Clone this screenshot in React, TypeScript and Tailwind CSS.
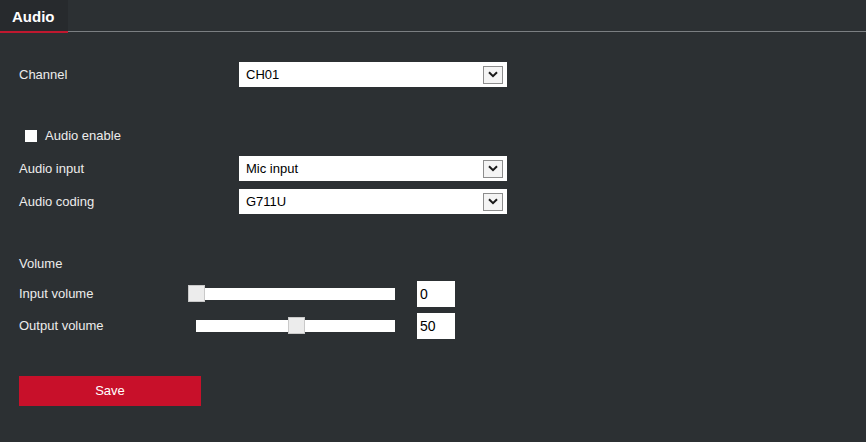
const font = "font-['Liberation_Sans',Arial,sans-serif]";

function Select({ value }: { value: string }) {
  return (
    <div className="flex h-[25px] w-[268px] items-center justify-between bg-white pl-[7px] pr-[4px] text-[13px] text-black">
      <span>{value}</span>
      <span className="flex h-[18px] w-[20px] items-center justify-center border border-[#8d8d8d] bg-[#f4f4f4]">
        <svg width="10" height="7" viewBox="0 0 10 7">
          <path d="M1 1.2 L5 5.2 L9 1.2" fill="none" stroke="#1a1a1a" strokeWidth="2" />
        </svg>
      </span>
    </div>
  );
}

function Slider({ width, thumbLeft }: { width: number; thumbLeft: string }) {
  return (
    <div className="relative h-[12px] bg-white" style={{ width }}>
      <div
        className={`absolute top-[-3px] h-[17px] w-[17px] border border-[#c9c9c9] bg-[#ececec] ${thumbLeft}`}
      />
    </div>
  );
}

export default function App() {
  return (
    <div className={`h-[442px] w-[866px] bg-[#2c3033] text-[13px] text-[#ececec] ${font}`}>
      {/* tab header */}
      <div className="flex h-[31px] items-end">
        <div className="flex h-[31px] w-[68px] items-start bg-[#272a2d] pl-[12px] pt-[6px] text-[15px] font-bold text-white">
          Audio
        </div>
      </div>
      <div className="flex h-[3px]">
        <div className="h-[2px] w-[68px] bg-[#c0182f]" />
        <div className="h-[1px] flex-1 bg-[#7b7f82]" />
      </div>

      <div className="flex flex-col pl-[19px]">
        <div className="mt-[28px] flex h-[25px] items-center">
          <span className="w-[220px]">Channel</span>
          <Select value="CH01" />
        </div>

        <div className="mt-[37px] flex h-[24px] items-center pl-[6px]">
          <span className="mr-[8px] h-[12px] w-[12px] bg-white" />
          <span>Audio enable</span>
        </div>

        <div className="mt-[8px] flex h-[25px] items-center">
          <span className="w-[220px]">Audio input</span>
          <Select value="Mic input" />
        </div>

        <div className="mt-[8px] flex h-[25px] items-center">
          <span className="w-[220px]">Audio coding</span>
          <Select value="G711U" />
        </div>

        <div className="mt-[40px] flex h-[20px] items-center">Volume</div>

        <div className="mt-[7px] flex h-[26px] items-center">
          <span className="w-[171px]">Input volume</span>
          <Slider width={205} thumbLeft="left-[-2px]" />
          <div className="ml-[22px] flex h-[26px] w-[38px] items-center bg-white pl-[3px] text-[14px] text-black">
            0
          </div>
        </div>

        <div className="mt-[6px] flex h-[26px] items-center">
          <span className="w-[177px]">Output volume</span>
          <Slider width={199} thumbLeft="left-[92px]" />
          <div className="ml-[22px] flex h-[26px] w-[38px] items-center bg-white pl-[3px] text-[14px] text-black">
            50
          </div>
        </div>

        <button className="mt-[37px] flex h-[30px] w-[182px] items-center justify-center bg-[#c8102a] text-[13px] text-white">
          Save
        </button>
      </div>
    </div>
  );
}
